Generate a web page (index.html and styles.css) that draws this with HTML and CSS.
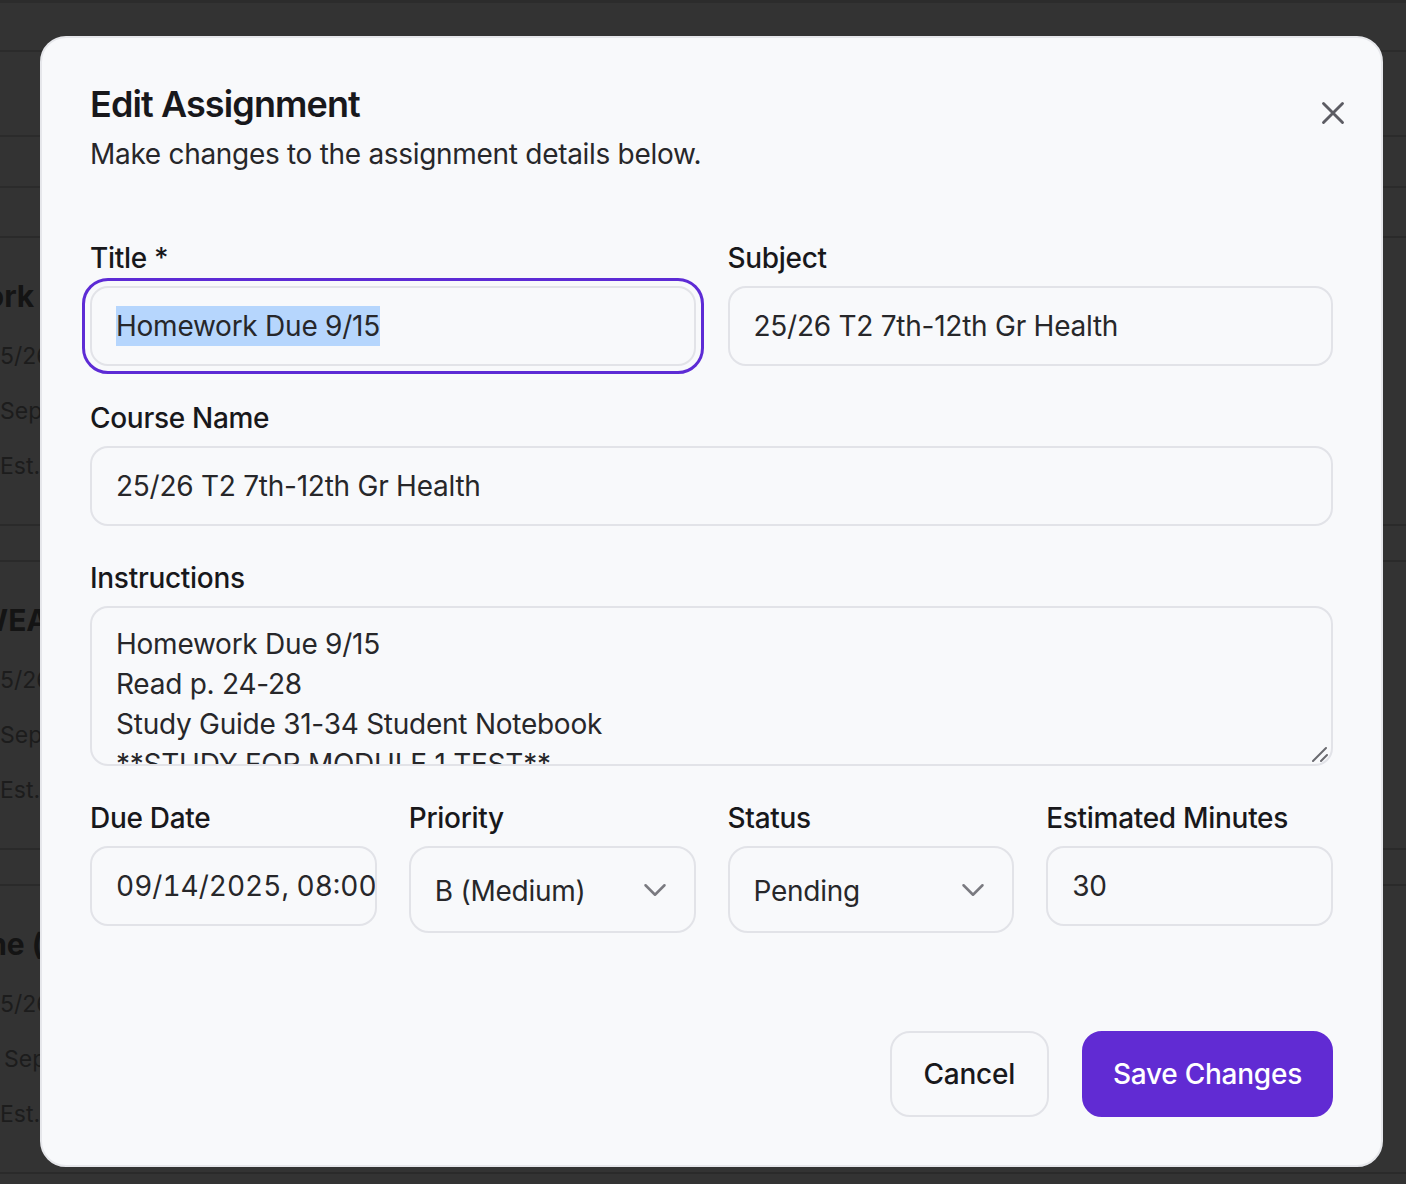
FILE: index.html
```html
<!DOCTYPE html>
<html lang="en">
<head>
<meta charset="utf-8">
<title>Edit Assignment</title>
<link rel="stylesheet" href="styles.css">
</head>
<body>
<div class="page">
  <div class="topbar"></div>
  <div class="toolbar"><span class="tool-btn"></span></div>
  <div class="tabs"></div>
  <div class="cards">
    <div class="card">
      <div class="card-body">
        <div class="card-title">Homework Due 9/15</div>
        <div class="card-line l-course">25/26 T2 7th-12th Gr Health</div>
        <div class="card-line">Sep 15, 2025</div>
        <div class="card-line">Est. 30 min</div>
      </div>
      <span class="card-btn"></span>
    </div>
    <div class="card">
      <div class="card-body">
        <div class="card-title t2">WEAR</div>
        <div class="card-line l-course">25/26 T2 7th-12th Gr Health</div>
        <div class="card-line">Sep 16, 2025</div>
        <div class="card-line">Est. 30 min</div>
      </div>
      <span class="card-btn"></span>
    </div>
    <div class="card">
      <div class="card-body">
        <div class="card-title t3">Module One (</div>
        <div class="card-line l-course">25/26 T2 7th-12th Gr Health</div>
        <div class="card-line l-sep">Sep 18, 2025</div>
        <div class="card-line">Est. 45 min</div>
      </div>
      <span class="card-btn"></span>
    </div>
  </div>
</div>

<div class="overlay">
  <div class="modal" role="dialog" aria-labelledby="dlg-title">
    <button class="close" aria-label="Close">
      <svg width="38" height="38" viewBox="0 0 24 24" fill="none" stroke="currentColor" stroke-width="1.8" stroke-linecap="round"><path d="M18 6 6 18M6 6l12 12"/></svg>
    </button>
    <h2 id="dlg-title" class="title">Edit Assignment</h2>
    <p class="subtitle">Make changes to the assignment details below.</p>

    <div class="form">
      <div class="row2">
        <div class="field">
          <label class="label">Title *</label>
          <div class="input focused"><span class="sel">Homework Due 9/15</span></div>
        </div>
        <div class="field">
          <label class="label">Subject</label>
          <div class="input">25/26 T2 7th-12th Gr Health</div>
        </div>
      </div>

      <div class="field">
        <label class="label">Course Name</label>
        <div class="input">25/26 T2 7th-12th Gr Health</div>
      </div>

      <div class="field">
        <label class="label">Instructions</label>
        <div class="textarea">
          <div class="ta-text">Homework Due 9/15<br>Read p. 24-28<br>Study Guide 31-34 Student Notebook<br>**STUDY FOR MODULE 1 TEST**</div>
          <svg class="grip" width="16" height="16" viewBox="0 0 16 16" fill="none" stroke="#6b6b70" stroke-width="2" stroke-linecap="round"><path d="M1 15 14 2M9 15l6-6"/></svg>
        </div>
      </div>

      <div class="row4">
        <div class="field">
          <label class="label">Due Date</label>
          <div class="input date">09/14/2025, 08:00 AM</div>
        </div>
        <div class="field">
          <label class="label">Priority</label>
          <div class="select"><span>B (Medium)</span>
            <svg width="38" height="38" viewBox="0 0 24 24" fill="none" stroke="#7a7a80" stroke-width="1.6" stroke-linecap="round" stroke-linejoin="round"><path d="m6 9 6 6 6-6"/></svg>
          </div>
        </div>
        <div class="field">
          <label class="label">Status</label>
          <div class="select"><span>Pending</span>
            <svg width="38" height="38" viewBox="0 0 24 24" fill="none" stroke="#7a7a80" stroke-width="1.6" stroke-linecap="round" stroke-linejoin="round"><path d="m6 9 6 6 6-6"/></svg>
          </div>
        </div>
        <div class="field">
          <label class="label">Estimated Minutes</label>
          <div class="input">30</div>
        </div>
      </div>
    </div>

    <div class="footer">
      <button class="btn btn-outline">Cancel</button>
      <button class="btn btn-primary">Save Changes</button>
    </div>
  </div>
</div>
</body>
</html>
```

FILE: styles.css
```css
* { box-sizing: border-box; }

html, body {
  margin: 0;
  height: 100%;
}

body {
  background: #333333;
  font-family: "Inter", "Liberation Sans", sans-serif;
  overflow: hidden;
}

/* ---------- dimmed page behind the dialog ---------- */
.page {
  width: 1640px;
  margin-left: -130px;
  color: #1a1a1a;
}

.topbar {
  height: 52px;
  border-top: 3px solid #2c2c2c;
  border-bottom: 2px solid #2b2b2b;
}

.toolbar {
  height: 85px;
  border-bottom: 2px solid #2b2b2b;
  display: flex;
  justify-content: flex-end;
  align-items: center;
  padding-right: 180px;
}

.tool-btn {
  width: 70px;
  height: 76px;
  border: 2px solid #2a2a2a;
  border-radius: 18px;
}

.tabs {
  height: 51px;
  border-bottom: 2px solid #2b2b2b;
  margin-bottom: 48px;
}

.cards {
  display: flex;
  flex-direction: column;
  gap: 34px;
}

.card {
  height: 290px;
  border-top: 2px solid #2a2a2a;
  border-bottom: 2px solid #2a2a2a;
  display: flex;
  justify-content: space-between;
  align-items: center;
  padding: 36px 160px 0 0;
}

.card-body {
  align-self: flex-start;
  padding-top: 2px;
}

.card-title {
  font-weight: 700;
  font-size: 30px;
  line-height: 40px;
  color: #141414;
  margin-left: 5px;
  margin-bottom: 20px;
  white-space: nowrap;
}

.card-title.t2 { margin-left: 107px; }
.card-title.t3 { margin-left: -22px; }

.card-line {
  font-size: 23px;
  line-height: 40px;
  color: #1c1c1c;
  margin-left: 130px;
  margin-bottom: 15px;
  white-space: nowrap;
}

.card-line.l-course { margin-left: 116px; }
.card-line.l-sep { margin-left: 134px; }

.card-btn {
  width: 70px;
  height: 88px;
  border: 2px solid #2a2a2a;
  border-radius: 20px;
  margin-top: -40px;
}

/* ---------- overlay & dialog ---------- */
.overlay {
  position: fixed;
  inset: 0;
  display: flex;
  align-items: flex-start;
  justify-content: flex-start;
  padding: 36px 0 0 40px;
}

.modal {
  position: relative;
  width: 1343px;
  background: #f8f9fb;
  border: 2px solid #e6e7eb;
  border-radius: 26px;
  padding: 46px 48px 48px;
  color: #18181b;
}

.close {
  position: absolute;
  top: 55px;
  right: 28px;
  width: 40px;
  height: 40px;
  padding: 0;
  border: 0;
  background: transparent;
  color: #5c5c63;
  display: flex;
  align-items: center;
  justify-content: center;
}

.title {
  margin: 0;
  font-size: 36px;
  line-height: 40px;
  font-weight: 600;
  letter-spacing: -0.9px;
  color: #18181b;
}

.subtitle {
  margin: 10px 0 0;
  font-size: 28px;
  line-height: 40px;
  letter-spacing: -0.3px;
  color: #27272a;
}

.form {
  margin-top: 64px;
  display: flex;
  flex-direction: column;
  gap: 32px;
}

.row2 {
  display: grid;
  grid-template-columns: minmax(0, 1fr) minmax(0, 1fr);
  gap: 32px;
}

.row4 {
  display: grid;
  grid-template-columns: repeat(4, minmax(0, 1fr));
  gap: 32px;
  align-items: start;
}

.field {
  min-width: 0;
}

.label {
  display: block;
  font-size: 28px;
  line-height: 40px;
  font-weight: 500;
  letter-spacing: -0.3px;
  color: #18181b;
  margin-bottom: 8px;
  white-space: nowrap;
}

.input {
  height: 80px;
  border: 2px solid #e2e3e8;
  border-radius: 18px;
  background: #f8f9fb;
  padding: 0 24px;
  display: flex;
  align-items: center;
  font-size: 28px;
  line-height: 40px;
  letter-spacing: -0.25px;
  color: #27272a;
  white-space: nowrap;
  overflow: hidden;
}

.input.focused {
  outline: 3px solid #5d2bd5;
  outline-offset: 5px;
}

.sel {
  background: #b6d6fd;
}

.input.date {
  padding-right: 0;
  letter-spacing: 0;
  font-variant-numeric: tabular-nums;
}

.textarea {
  position: relative;
  height: 160px;
  border: 2px solid #e2e3e8;
  border-radius: 18px;
  background: #f8f9fb;
  padding: 16px 24px;
  overflow: hidden;
}

.ta-text {
  font-size: 28px;
  line-height: 40px;
  letter-spacing: -0.25px;
  color: #27272a;
  white-space: nowrap;
}

.grip {
  position: absolute;
  right: 3px;
  bottom: 2px;
}

.select {
  height: 87px;
  border: 2px solid #e2e3e8;
  border-radius: 20px;
  background: #f8f9fb;
  padding: 0 20px 0 24px;
  display: flex;
  align-items: center;
  justify-content: space-between;
  font-size: 28px;
  line-height: 40px;
  letter-spacing: -0.25px;
  color: #27272a;
}

.select span {
  padding-top: 2px;
  white-space: nowrap;
}

.footer {
  margin-top: 98px;
  display: flex;
  justify-content: flex-end;
  gap: 33px;
}

.btn {
  height: 86px;
  padding: 0 32px;
  border-radius: 20px;
  font-family: inherit;
  font-size: 28px;
  line-height: 40px;
  font-weight: 500;
  letter-spacing: -0.25px;
}

.btn-outline {
  background: #f8f9fb;
  border: 2px solid #e2e3e8;
  color: #18181b;
}

.btn-primary {
  padding: 0 29px;
  background: #612bd3;
  border: 2px solid #612bd3;
  color: #ffffff;
}
```
